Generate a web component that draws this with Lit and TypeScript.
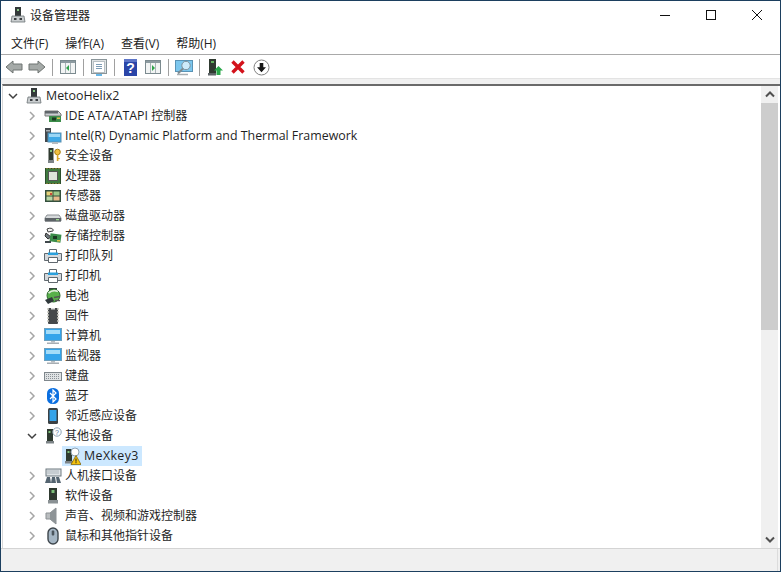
import { LitElement, html, css, svg } from "lit";
import { customElement } from "lit/decorators.js";

const S = (body: unknown, w = 18, h = 18) =>
  html`<svg width=${w} height=${h} viewBox="0 0 ${w} ${h}" xmlns="http://www.w3.org/2000/svg">${body}</svg>`;

const tower = svg`<rect x="4.5" y="1" width="5" height="12" fill="#2f3a30"/><rect x="6" y="3" width="2" height="2" fill="#7ec07a"/>`;
const pc = svg`<rect x="6" y="1" width="6" height="9" fill="#34393a"/><rect x="8" y="3" width="2" height="2" fill="#8ccb88"/><path d="M3 10h12l1 6H2z" fill="#c9cdcf" stroke="#6d7376" stroke-width=".8"/><rect x="5" y="12" width="2.5" height="2" fill="#3b3f42"/><rect x="10.5" y="12" width="2.5" height="2" fill="#3b3f42"/>`;
const printer = svg`<path d="M5.5 2.5h7v5h-7z" fill="#fff" stroke="#60686e"/><path d="M.5 6.5h17v7h-17z" fill="#d3d8dc" stroke="#61696f"/><rect x="4" y="5.5" width="10" height="2.5" fill="#2aa0dc"/><path d="M4.5 10.5h9v5h-9z" fill="#fff" stroke="#60686e"/>`;
const monitor = svg`<rect x=".5" y="1.5" width="17" height="12" fill="#35a4ea" stroke="#6d9fbd"/><rect x="2" y="3" width="14" height="4" fill="#a4dcf8"/><rect x="7" y="14" width="4" height="1.5" fill="#b6bcc0"/><rect x="3" y="15.5" width="12" height="1.5" fill="#a7aeb3"/>`;
const warn = svg`<path d="M13 8.5l5 9H8z" fill="#f4c20d" stroke="#7a5a00" stroke-width=".7"/><rect x="12.5" y="11.5" width="1" height="3.2" fill="#222"/><rect x="12.5" y="15.2" width="1" height="1" fill="#222"/>`;
const question = svg`<circle cx="13" cy="5" r="4.2" fill="#fff" stroke="#8fa4b5"/><text x="13" y="7.6" font-size="7" text-anchor="middle" font-family="Liberation Sans" fill="#5577a0">?</text>`;

const ICONS: Record<string, unknown> = {
  root: S(pc),
  ide: S(svg`<path d="M1 4h13l3 3v2H1z" fill="#c9cdd0" stroke="#777"/><rect x="1" y="4" width="13" height="2.5" fill="#60666a"/><rect x="5" y="9" width="12" height="6" fill="#3c8d4a"/><rect x="8" y="10.5" width="4" height="3" fill="#1b3a22"/><rect x="13" y="10.5" width="3" height="1.5" fill="#d9c14a"/>`),
  framework: S(svg`<rect x="1" y="1" width="6" height="14" fill="#43494d"/><rect x="2" y="3" width="4" height="1.5" fill="#a8b0b5"/><rect x="4" y="6" width="13" height="9" fill="#3fa9e6" stroke="#5a8fb0"/><rect x="5" y="7" width="11" height="3" fill="#9ad6f5"/><rect x="8" y="15" width="6" height="2" fill="#b6bcc0"/>`),
  security: S(svg`${tower}<rect x="4" y="13" width="6" height="3" fill="#7d8487"/><circle cx="13.5" cy="5" r="2.8" fill="#f0c040" stroke="#a77f10"/><rect x="12.8" y="7" width="1.6" height="7" fill="#d8a828"/><rect x="14" y="11" width="1.8" height="1.2" fill="#d8a828"/>`),
  cpu: S(svg`<rect x="1.500" y="1.500" width="15" height="15" fill="#3f7a3f" stroke="#2c4f2c"/><path d="M3 1v1M6 1v1M9 1v1M12 1v1M15 1v1M3 16v1M6 16v1M9 16v1M12 16v1M15 16v1" stroke="#c4a63c"/><rect x="4.500" y="4.500" width="9" height="9" fill="#dfe5dc" stroke="#555"/>`),
  sensor: S(svg`<rect x="1" y="3" width="16" height="12" fill="#34503d"/><rect x="2.500" y="4.500" width="6" height="4" fill="#e7d27a"/><rect x="9.500" y="4.500" width="6" height="4" fill="#9fc98a"/><rect x="2.500" y="9.500" width="6" height="4" fill="#b9d7a5"/><rect x="9.500" y="9.500" width="6" height="4" fill="#e6b98a"/><rect x="6" y="6" width="2" height="2" fill="#cc4a3a"/>`),
  disk: S(svg`<path d="M3 8h12l2 3v3H1v-3z" fill="#d6d9db" stroke="#8a8f93"/><rect x="1" y="11" width="16" height="3.500" fill="#5d6367"/><rect x="12" y="12" width="3" height="1.300" fill="#9ed78e"/>`),
  storage: S(svg`<path d="M3 2c4-2 7 0 6 2l-5 1z" fill="#f1f1ef" stroke="#444"/><path d="M2 6l5 4-3 2-3-3z" fill="#70797e" stroke="#333"/><rect x="6" y="7" width="11" height="8" fill="#3c8d4a" transform="rotate(8 11 11)"/><rect x="9" y="9" width="4" height="3" fill="#1b3a22"/><rect x="13" y="13" width="3" height="1.500" fill="#d9c14a"/><path d="M1 14h6v2H1z" fill="#40484c"/>`),
  printer: S(printer),
  battery: S(svg`<rect x="5" y="1" width="8" height="5" fill="#3a4245"/><circle cx="9.500" cy="8.500" r="6.500" fill="#58b04a" stroke="#2c6a2c"/><path d="M4.500 6c3-2.500 6-3 9.500-1.500" stroke="#dcebd8" stroke-width="1.800" fill="none"/><path d="M1 13l7-3 2 4-6 3z" fill="#30393c"/><path d="M10 10.500l6-1M11 13.500h5" stroke="#555" stroke-width="1.300"/>`),
  firmware: S(svg`<rect x="4" y="1" width="10" height="16" rx="1" fill="#45494b"/><path d="M3 2h2M3 5h2M3 8h2M3 11h2M3 14h2M13 2h2M13 5h2M13 8h2M13 11h2M13 14h2" stroke="#c9c9c0" stroke-width="1.400"/><path d="M7 1h4v1.500H7z" fill="#dadada"/>`),
  computer: S(monitor),
  keyboard: S(svg`<rect x=".5" y="5.500" width="17" height="8" fill="#dfe2e4" stroke="#7f878c"/><path d="M2 7.500h14M2 9.500h14M2 11.500h14" stroke="#8a9297" stroke-dasharray="1 1"/>`),
  bluetooth: S(svg`<rect x="3" y="1" width="12" height="16" rx="5.500" fill="#0b6fe0"/><path d="M6 6l6 6-3 3V3l3 3-6 6" stroke="#fff" stroke-width="1.200" fill="none"/>`),
  proximity: S(svg`<rect x="4" y="1" width="10" height="16" rx="1.500" fill="#3b4144"/><rect x="5.500" y="3" width="7" height="11" fill="#36a4ea"/>`),
  other: S(svg`<rect x="3" y="2" width="6" height="12" fill="#2f3a30"/><rect x="4.500" y="4" width="2" height="2" fill="#7ec07a"/><rect x="2" y="14" width="8" height="2.500" fill="#7d8487"/>${question}`),
  mexkey: S(svg`<rect x="3" y="2" width="6" height="12" fill="#2f3a30"/><rect x="4.500" y="4" width="2" height="2" fill="#7ec07a"/><rect x="2" y="14" width="8" height="2.500" fill="#7d8487"/><circle cx="12" cy="5" r="4" fill="#fff" stroke="#8fa4b5"/>${warn}`),
  hid: S(svg`<rect x="2" y="2" width="15" height="7" fill="#dfe3e6" stroke="#6f7a80"/><path d="M3.500 4h12M3.500 6h12" stroke="#7d8a92" stroke-dasharray="1 1"/><path d="M1 16l2-6h3l1 6zM7 16l1-6h3l1 6zM13 16l-1-6h3l2 6z" fill="#546470"/>`),
  software: S(svg`<rect x="5" y="1" width="8" height="12" fill="#2f3a30"/><rect x="7.500" y="3" width="3" height="3" fill="#7ec07a"/><rect x="4" y="13" width="10" height="3.500" fill="#8a9194"/>`),
  sound: S(svg`<path d="M2 6h4l6-5v16l-6-5H2z" fill="#b9bdbf" stroke="#8b9093"/><path d="M6 6l6-5v16l-6-5z" fill="#8e9497"/>`),
  mouse: S(svg`<rect x="4" y="1" width="10" height="16" rx="5" fill="#a5b6c4" stroke="#3e464c" stroke-width="1.400"/><rect x="7.700" y="3.500" width="2.600" height="5" rx="1" fill="#4a555c"/>`),
};

const ROWS: [string, string, boolean?][] = [
  ["ide", "IDE ATA/ATAPI 控制器"],
  ["framework", "Intel(R) Dynamic Platform and Thermal Framework"],
  ["security", "安全设备"],
  ["cpu", "处理器"],
  ["sensor", "传感器"],
  ["disk", "磁盘驱动器"],
  ["storage", "存储控制器"],
  ["printer", "打印队列"],
  ["printer", "打印机"],
  ["battery", "电池"],
  ["firmware", "固件"],
  ["computer", "计算机"],
  ["computer", "监视器"],
  ["keyboard", "键盘"],
  ["bluetooth", "蓝牙"],
  ["proximity", "邻近感应设备"],
  ["other", "其他设备", true],
];
const ROWS2: [string, string][] = [
  ["hid", "人机接口设备"],
  ["software", "软件设备"],
  ["sound", "声音、视频和游戏控制器"],
  ["mouse", "鼠标和其他指针设备"],
];

const chevR = html`<svg class="chev" width="9" height="10" viewBox="0 0 9 10"><path d="M2 1l4 4-4 4" fill="none" stroke="#a6a6a6" stroke-width="1.500"/></svg>`;
const chevD = html`<svg class="chev" width="10" height="9" viewBox="0 0 10 9"><path d="M1 2l4 4 4-4" fill="none" stroke="#404040" stroke-width="1.500"/></svg>`;

const windowPane = (arrow: unknown) => svg`<rect x=".5" y="1.500" width="15" height="13" fill="#f2f4f4" stroke="#7b8a8f"/><rect x="1" y="2" width="14" height="2" fill="#8c9aa0"/><path d="M5.500 4v10M10.500 4v10" stroke="#a8b3b7"/>${arrow}`;

/** Wraps CJK runs so that they take the 12px size the Latin runs do not use. */
const runs = (t: string) =>
  t.split(/([\u3000-\u9fff]+)/).map((p, i) => (i % 2 ? html`<span class="cjk">${p}</span>` : p));

@customElement("app-root")
export class AppRoot extends LitElement {
  static styles = css`
    :host { display: block; width: 781px; height: 572px; font-family: "Open Sans", "Noto Sans CJK SC", sans-serif; color: #1a1a1a; }
    * { box-sizing: border-box; }
    .win { width: 781px; height: 572px; border: 1px solid #1c3f5f; background: #fff; display: flex; flex-direction: column; overflow: hidden; }
    .title { height: 29px; display: flex; align-items: center; flex: none; padding: 0 0 1px 8px; }
    .title-text { font-size: 12px; margin-left: 3px; color: #222; }
    .caps { margin-left: auto; display: flex; height: 28px; }
    .cap { width: 46px; display: flex; align-items: center; justify-content: center; }
    .menu { height: 25px; display: flex; align-items: center; flex: none; border-bottom: 1px solid #a9a9a9; padding: 1px 0 0 10px; gap: 17px; font-size: 12px; color: #222; }
    .tools { height: 23px; flex: none; display: flex; align-items: center; padding: 1px 0 0 1.5px; }
    .tool { width: 23px; height: 22px; display: flex; align-items: center; justify-content: center; }
    .sep { width: 1px; height: 17px; background: #a0a0a0; margin: 0 4px 0 3px; }
    .gap { height: 6px; flex: none; background: #f0f0f0; border-top: 1px solid #e3e3e3; }
    .tree-wrap { flex: 1; min-height: 0; display: flex; margin-left: 1px; border-top: 2px solid #6a6a6a; border-left: 1px solid #d8d8d8; overflow: hidden; }
    .tree { flex: 1; font-size: 12.4px; color: #1f1f1f; }
    .cjk { font-size: 12px; }
    .row { height: 20px; display: flex; align-items: center; white-space: nowrap; }
    .txt { padding-bottom: 2px; }
    .exp { width: 18px; margin-left: 20px; display: flex; justify-content: center; flex: none; }
    .ic { width: 18px; height: 18px; margin-left: 3px; margin-right: 3px; flex: none; }
    .ic svg, .tool svg, .cap svg, .title svg { display: block; }
    .root .exp { margin-left: 1px; }
    .sel { margin-left: 59px; height: 20px; display: flex; align-items: center; background: #cce8ff; padding-right: 3px; }
    .sel .ic { margin-left: 1px; margin-right: 3px; }
    .sel .txt { letter-spacing: 0.4px; }
    .sb { width: 17px; flex: none; background: #f0f0f0; display: flex; flex-direction: column; margin-right: 2px; }
    .sb-arrow { height: 17px; display: flex; align-items: center; justify-content: center; flex: none; }
    .sb-thumb { height: 227px; flex: none; background: #cdcdcd; }
    .sb-fill { flex: 1; }
    .status { height: 23px; flex: none; background: #f0f0f0; border-top: 1px solid #d4d4d4; display: flex; justify-content: flex-end; }
    .status-cell { width: 1px; background: #dcdcdc; margin-right: 2px; }
  `;

  private row(r: [string, string, boolean?]) {
    return html`<div class="row"><span class="exp">${r[2] ? chevD : chevR}</span><span class="ic">${ICONS[r[0]]}</span><span class="txt">${runs(r[1])}</span></div>`;
  }

  render() {
    return html`<div class="win">
      <div class="title">
        ${S(pc, 18, 18)}
        <span class="title-text">设备管理器</span>
        <div class="caps">
          <div class="cap"><svg width="10" height="10" viewBox="0 0 10 10"><path d="M0 5.500h10" stroke="#111"/></svg></div>
          <div class="cap"><svg width="10" height="10" viewBox="0 0 10 10"><rect x=".5" y=".5" width="9" height="9" fill="none" stroke="#111"/></svg></div>
          <div class="cap"><svg width="10" height="10" viewBox="0 0 10 10"><path d="M0 0l10 10M10 0L0 10" stroke="#111"/></svg></div>
        </div>
      </div>
      <div class="menu"><span>文件(F)</span><span>操作(A)</span><span>查看(V)</span><span>帮助(H)</span></div>
      <div class="tools">
        <div class="tool"><svg width="18" height="16" viewBox="0 0 18 16"><path d="M1 8l7-6v3h9v6H8v3z" fill="#a5aaa8" stroke="#6f7472"/></svg></div>
        <div class="tool"><svg width="18" height="16" viewBox="0 0 18 16"><path d="M17 8l-7-6v3H1v6h9v3z" fill="#a5aaa8" stroke="#6f7472"/></svg></div>
        <div class="sep"></div>
        <div class="tool"><svg width="16" height="16" viewBox="0 0 16 16">${windowPane(svg`<path d="M9 6v6L6 9z" fill="#2fa24a"/>`)}</svg></div>
        <div class="sep"></div>
        <div class="tool"><svg width="16" height="17" viewBox="0 0 16 17"><rect x=".5" y=".5" width="15" height="14" fill="#dfe3e4" stroke="#8a9599"/><rect x="2.500" y="2.500" width="11" height="11" fill="#fff" stroke="#b8c0c4"/><path d="M5 5.500h6M5 7.500h6M5 9.500h6" stroke="#7d9cb5"/><rect x="5" y="15" width="6" height="2" fill="#67b7e8"/></svg></div>
        <div class="sep"></div>
        <div class="tool"><svg width="13" height="17" viewBox="0 0 13 17"><rect width="13" height="17" fill="#2a45a8"/><path d="M0 0h13v3H0z" fill="#5d75c8"/><text x="6.500" y="14" font-size="14" font-weight="700" text-anchor="middle" font-family="Liberation Sans" fill="#fff">?</text></svg></div>
        <div class="tool"><svg width="16" height="16" viewBox="0 0 16 16">${windowPane(svg`<path d="M7 6v6l3-3z" fill="#2fa24a"/>`)}</svg></div>
        <div class="sep"></div>
        <div class="tool"><svg width="18" height="17" viewBox="0 0 18 17"><rect x=".5" y="1.500" width="17" height="11" fill="#7cc7ee" stroke="#5a93b5"/><circle cx="11" cy="6.500" r="4.200" fill="#cdeafa" stroke="#7d8f9a"/><path d="M8 9.500l-5 5" stroke="#7e8a90" stroke-width="2"/><path d="M2 15.500h11" stroke="#a8aeb2" stroke-width="1.500"/></svg></div>
        <div class="sep"></div>
        <div class="tool"><svg width="15" height="18" viewBox="0 0 15 18"><rect x="1" y="1" width="7" height="14" fill="#2f3a30"/><rect x="3" y="3" width="3" height="2" fill="#63b35f"/><rect x="0" y="15" width="8" height="2.500" fill="#5e6467"/><path d="M10.500 8l4.500 4.500h-2.500V17h-4v-4.500H6z" fill="#2aa84a"/></svg></div>
        <div class="tool"><svg width="14" height="14" viewBox="0 0 14 14"><path d="M1.500 1.500l11 11M12.500 1.500l-11 11" stroke="#d3121b" stroke-width="3.400"/></svg></div>
        <div class="tool"><svg width="17" height="17" viewBox="0 0 17 17"><circle cx="8.500" cy="8.500" r="7.500" fill="#fff" stroke="#7f7f7f"/><path d="M6.700 4h3.600v4.200H13l-4.500 5-4.500-5h2.700z" fill="#151515"/></svg></div>
      </div>
      <div class="gap"></div>
      <div class="tree-wrap">
        <div class="tree">
          <div class="row root"><span class="exp">${chevD}</span><span class="ic">${ICONS.root}</span><span class="txt">MetooHelix2</span></div>
          ${ROWS.map((r) => this.row(r))}
          <div class="row"><div class="sel"><span class="ic">${ICONS.mexkey}</span><span class="txt">MeXkey3</span></div></div>
          ${ROWS2.map((r) => this.row(r))}
        </div>
        <div class="sb">
          <div class="sb-arrow"><svg width="10" height="7" viewBox="0 0 10 7"><path d="M1 5.500l4-4 4 4" fill="none" stroke="#505050" stroke-width="2"/></svg></div>
          <div class="sb-thumb"></div>
          <div class="sb-fill"></div>
          <div class="sb-arrow"><svg width="10" height="7" viewBox="0 0 10 7"><path d="M1 1.500l4 4 4-4" fill="none" stroke="#505050" stroke-width="2"/></svg></div>
        </div>
      </div>
      <div class="status"><div class="status-cell"></div></div>
    </div>`;
  }
}
